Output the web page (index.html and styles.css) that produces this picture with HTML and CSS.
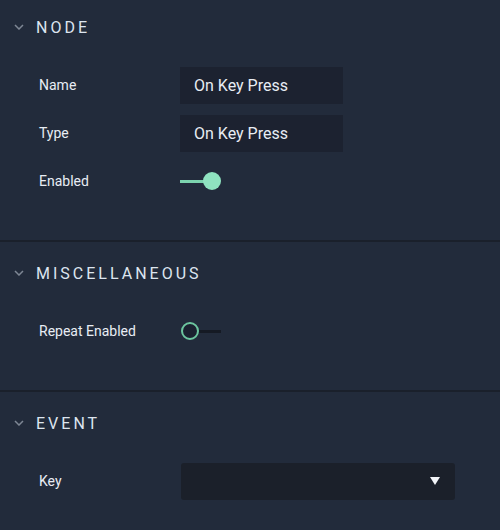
FILE: index.html
```html
<!DOCTYPE html>
<html lang="en">
<head>
<meta charset="utf-8">
<title>Node Inspector</title>
<link rel="stylesheet" href="styles.css">
</head>
<body>
<main class="inspector">
  <section class="panel">
    <header class="panel-head">
      <svg class="chevron" width="10" height="6" viewBox="0 0 10 6"><path d="M1 1 L5 5 L9 1" fill="none" stroke="currentColor" stroke-width="1.5"/></svg>
      <h2 class="panel-title">NODE</h2>
    </header>
    <div class="rows">
      <div class="row"><span class="label">Name</span><div class="field">On Key Press</div></div>
      <div class="row"><span class="label">Type</span><div class="field">On Key Press</div></div>
      <div class="row"><span class="label">Enabled</span><div class="toggle toggle-on"><span class="track"></span><span class="knob"></span></div></div>
    </div>
  </section>
  <section class="panel">
    <header class="panel-head">
      <svg class="chevron" width="10" height="6" viewBox="0 0 10 6"><path d="M1 1 L5 5 L9 1" fill="none" stroke="currentColor" stroke-width="1.5"/></svg>
      <h2 class="panel-title">MISCELLANEOUS</h2>
    </header>
    <div class="rows">
      <div class="row"><span class="label">Repeat Enabled</span><div class="toggle toggle-off"><span class="knob"></span><span class="track"></span></div></div>
    </div>
  </section>
  <section class="panel">
    <header class="panel-head">
      <svg class="chevron" width="10" height="6" viewBox="0 0 10 6"><path d="M1 1 L5 5 L9 1" fill="none" stroke="currentColor" stroke-width="1.5"/></svg>
      <h2 class="panel-title">EVENT</h2>
    </header>
    <div class="rows">
      <div class="row"><span class="label">Key</span><div class="select"><span class="caret"></span></div></div>
    </div>
  </section>
</main>
</body>
</html>
```

FILE: styles.css
```css
html, body {
  margin: 0;
  padding: 0;
  background: #222b3b;
}
body {
  width: 500px;
  height: 530px;
  overflow: hidden;
  font-family: Roboto, "Liberation Sans", sans-serif;
  color: #e6ebf2;
}
.inspector {
  display: flex;
  flex-direction: column;
}
.panel {
  padding-bottom: 35px;
}
.panel + .panel {
  border-top: 2px solid #1a202b;
  padding-top: 4px;
}
.panel-head {
  height: 54px;
  display: flex;
  align-items: center;
  padding-left: 14px;
  gap: 12px;
}
.chevron {
  color: #7e8794;
  display: block;
}
.panel-title {
  margin: 0;
  font-size: 16px;
  font-weight: 400;
  letter-spacing: 3px;
  color: #dde5ef;
}
.rows {
  margin-top: 7px;
  display: flex;
  flex-direction: column;
}
.row {
  height: 48px;
  display: flex;
  align-items: center;
  padding-left: 39px;
}
.label {
  width: 141px;
  font-size: 14px;
  color: #e8edf4;
}
.field {
  width: 163px;
  height: 37px;
  box-sizing: border-box;
  padding-left: 14px;
  display: flex;
  align-items: center;
  background: #1c2230;
  font-size: 16px;
  color: #e8edf4;
}
.toggle {
  width: 41px;
  height: 18px;
  display: flex;
  align-items: center;
}
.toggle .track {
  height: 3px;
  flex: 1;
}
.toggle .knob {
  width: 18px;
  height: 18px;
  border-radius: 50%;
  box-sizing: border-box;
  flex: none;
}
.toggle-on .track {
  background: #7cd3ae;
  margin-right: -9px;
}
.toggle-on .knob {
  background: #8fe3c0;
  position: relative;
}
.toggle-off {
  padding-left: 1px;
  box-sizing: border-box;
}
.toggle-off .knob {
  border: 2.5px solid #6cc59f;
  background: #1b2130;
}
.toggle-off .track {
  background: #151a24;
}
.select {
  width: 274px;
  height: 37px;
  margin-left: 1px;
  border-radius: 3px;
  background: #1b202a;
  display: flex;
  align-items: center;
  justify-content: flex-end;
  padding-right: 15px;
  box-sizing: border-box;
}
.caret {
  width: 0;
  height: 0;
  border-left: 5.5px solid transparent;
  border-right: 5.5px solid transparent;
  border-top: 8px solid #f2f4f8;
}
```
